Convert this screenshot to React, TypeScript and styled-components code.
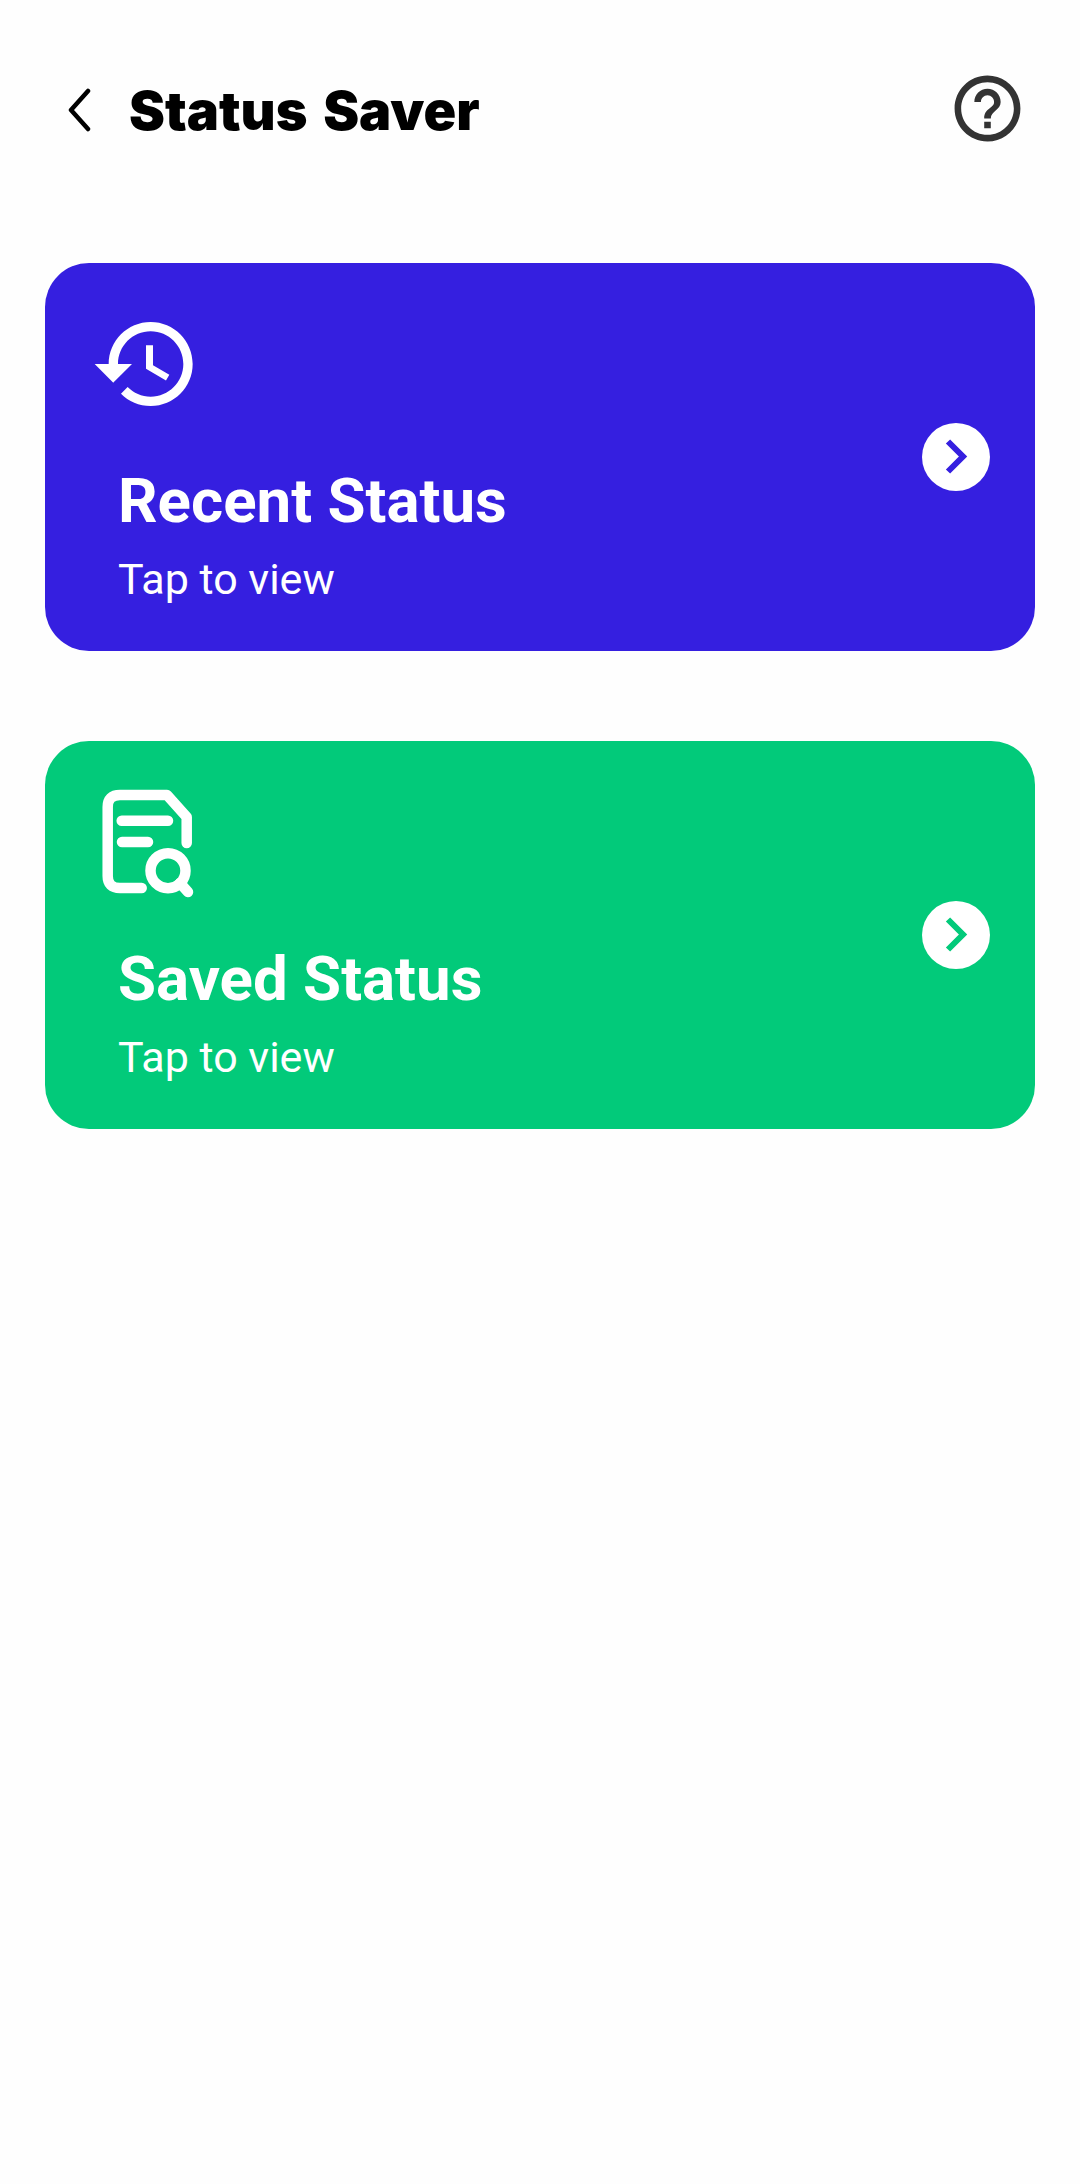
import React from "react";
import styled, { createGlobalStyle } from "styled-components";

const Global = createGlobalStyle`
  html, body { margin: 0; padding: 0; background: #fff; }
  body { font-family: Roboto, "Liberation Sans", sans-serif; }
`;
const Page = styled.div`
  width: 1080px;
  height: 2184px;
  background: #fefefe;
  overflow: hidden;
`;
const Header = styled.header`
  display: flex;
  align-items: center;
  height: 80px;
  margin-top: 68px;
  padding: 0 53px 0 64px;
`;
const BackIcon = styled.svg`
  width: 28px;
  height: 44px;
  margin-top: 4px;
  flex: none;
  fill: none;
  stroke: #000;
  stroke-width: 4.5;
  stroke-linecap: round;
  stroke-linejoin: round;
`;
const Title = styled.h1`
  flex: 1;
  margin: 6px 0 0 37px;
  font: 900 54px/80px Inter, sans-serif;
  word-spacing: 5px;
  color: #000;
`;
const HelpIcon = styled.svg`
  width: 79px;
  height: 79px;
  flex: none;
  fill: #333;
`;
const List = styled.main`
  display: flex;
  flex-direction: column;
  gap: 90px;
  margin-top: 115px;
  padding: 0 45px;
`;
const Card = styled.section<{ $bg: string }>`
  display: flex;
  align-items: center;
  justify-content: space-between;
  box-sizing: border-box;
  height: 388px;
  padding: 0 45px;
  border-radius: 44px;
  background: ${(p) => p.$bg};
`;
const Body = styled.div`
  display: flex;
  flex-direction: column;
  height: 100%;
  padding-top: 45px;
  box-sizing: border-box;
`;
const IconSlot = styled.div`
  height: 112px;
  color: #fff;
`;
const CardTitle = styled.h2`
  margin: 46px 0 0 28px;
  font: 700 61.8px/70px Roboto, sans-serif;
  color: #fff;
`;
const CardSub = styled.p`
  margin: 19px 0 0 28px;
  font: 400 43px/48px Roboto, sans-serif;
  color: #fff;
`;
const Arrow = styled.div`
  display: flex;
  align-items: center;
  justify-content: center;
  width: 68px;
  height: 68px;
  border-radius: 50%;
  background: #fff;
`;
const ArrowIcon = styled.svg<{ $c: string }>`
  width: 68px;
  height: 68px;
  fill: none;
  stroke: ${(p) => p.$c};
  stroke-width: 6;
`;

const HistoryIcon = () => (
  <svg width="112" height="112" viewBox="0 0 24 24" fill="currentColor">
    <path d="M13 3c-4.97 0-9 4.03-9 9H1l3.89 3.89.07.14L9 12H6c0-3.87 3.13-7 7-7s7 3.13 7 7-3.13 7-7 7c-1.93 0-3.68-.79-4.94-2.06l-1.42 1.42C8.27 19.99 10.51 21 13 21c4.97 0 9-4.03 9-9s-4.03-9-9-9zm-1 5v5l4.28 2.54.72-1.21-3.5-2.08V8H12z" />
  </svg>
);

const DocSearchIcon = () => (
  <svg
    width="112"
    height="122"
    viewBox="0 0 112 122"
    fill="none"
    stroke="currentColor"
    strokeWidth="10.5"
    strokeLinecap="round"
    strokeLinejoin="round"
  >
    <path d="M96.7 57V31L77 9H30Q17.7 9 17.7 21V90Q17.7 102 30 102H51.7" />
    <path d="M31.7 34.7H78M32 56H58" />
    <circle cx="78" cy="84.7" r="17.5" />
    <path d="M90 97L98 106" />
  </svg>
);

const StatusCard = ({ bg, icon, title }: { bg: string; icon: React.ReactNode; title: string }) => (
  <Card $bg={bg}>
    <Body>
      <IconSlot>{icon}</IconSlot>
      <CardTitle>{title}</CardTitle>
      <CardSub>Tap to view</CardSub>
    </Body>
    <Arrow>
      <ArrowIcon $c={bg} viewBox="0 0 68 68">
        <path d="M26 18.5L41 33.5L26 48.5" />
      </ArrowIcon>
    </Arrow>
  </Card>
);

export default function App() {
  return (
    <Page>
      <Global />
      <Header>
        <BackIcon viewBox="0 0 28 44">
          <path d="M24 3L7 22L24 41" />
        </BackIcon>
        <Title>Status Saver</Title>
        <HelpIcon viewBox="0 0 24 24">
          <path d="M11 18h2v-2h-2v2zm1-16C6.48 2 2 6.48 2 12s4.48 10 10 10 10-4.48 10-10S17.52 2 12 2zm0 18c-4.41 0-8-3.59-8-8s3.59-8 8-8 8 3.59 8 8-3.59 8-8 8zm0-14c-2.21 0-4 1.79-4 4h2c0-1.1.9-2 2-2s2 .9 2 2c0 2-3 1.75-3 5h2c0-2.25 3-2.5 3-5 0-2.21-1.79-4-4-4z" />
        </HelpIcon>
      </Header>
      <List>
        <StatusCard bg="#351fe0" icon={<HistoryIcon />} title="Recent Status" />
        <StatusCard bg="#02ca7a" icon={<DocSearchIcon />} title="Saved Status" />
      </List>
    </Page>
  );
}
